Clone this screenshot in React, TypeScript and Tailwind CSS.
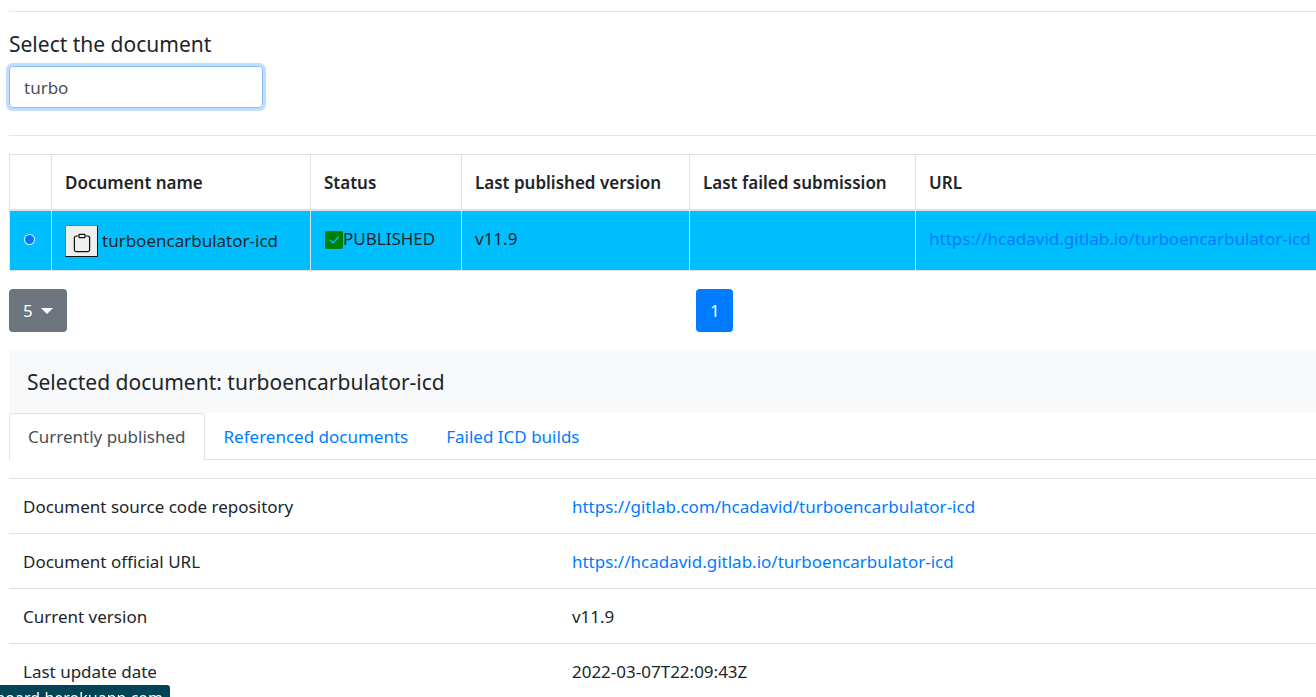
import { useState } from "react";

const columns = [
  { label: "Document name", width: "w-[259px]" },
  { label: "Status", width: "w-[151px]" },
  { label: "Last published version", width: "w-[228px]" },
  { label: "Last failed submission", width: "w-[226px]" },
  { label: "URL", width: "" },
];

const tabs = ["Currently published", "Referenced documents", "Failed ICD builds"];

const details = [
  { label: "Document source code repository", value: "https://gitlab.com/hcadavid/turboencarbulator-icd", link: true },
  { label: "Document official URL", value: "https://hcadavid.gitlab.io/turboencarbulator-icd", link: true },
  { label: "Current version", value: "v11.9", link: false },
  { label: "Last update date", value: "2022-03-07T22:09:43Z", link: false },
];

function ClipboardIcon() {
  return (
    <svg width="18" height="20" viewBox="0 0 18 20" fill="none" stroke="#111" strokeWidth="1.2" aria-hidden="true">
      <path d="M5.5 3H3.2A1.8 1.8 0 0 0 1.4 4.8v12a1.8 1.8 0 0 0 1.8 1.8h11.6a1.8 1.8 0 0 0 1.8-1.8v-12A1.8 1.8 0 0 0 14.8 3h-2.3" />
      <rect x="6" y="1.4" width="6" height="3.2" rx="0.6" />
    </svg>
  );
}

function CheckIcon() {
  return (
    <svg className="mt-1" width="18" height="18" viewBox="0 0 18 18" fill="none" aria-hidden="true">
      <rect width="18" height="18" rx="2" fill="#008000" />
      <path d="M5.2 9.2 8 11.9 13.2 6.3" stroke="#00bfff" strokeWidth="1.4" strokeLinecap="round" strokeLinejoin="round" />
    </svg>
  );
}

export default function App() {
  const [query, setQuery] = useState("turbo");
  const [tab, setTab] = useState(0);

  return (
    <div className="h-screen overflow-hidden bg-white pl-[9px] pt-[11px] font-['Noto_Sans',sans-serif] text-[17px] leading-[27px] text-[#212529]">
      <hr className="border-[#e5e5e5]" />
      <label htmlFor="search" className="mt-[19px] block text-[21px] leading-[27px]">
        Select the document
      </label>
      <input
        id="search"
        type="text"
        value={query}
        onChange={(e) => setQuery(e.target.value)}
        className="mt-2 block h-[42px] w-[254px] rounded-[4px] border border-[#80bdff] px-[14px] text-[#495057] shadow-[0_0_0_3px_#bfdeff] outline-none"
      />
      <hr className="mt-[27px] border-[#e5e5e5]" />

      <table className="mt-[18px] w-full table-fixed border-collapse border border-r-0 border-[#dee2e6]">
        <thead>
          <tr className="h-[55px] border-b-2 border-[#dee2e6]">
            <th className="w-[42px] border-r border-[#dee2e6]" aria-label="Selection" />
            {columns.map((c) => (
              <th
                key={c.label}
                className={`${c.width} border-r border-[#dee2e6] px-[13px] pt-px text-left font-semibold last:border-r-0`}
              >
                {c.label}
              </th>
            ))}
          </tr>
        </thead>
        <tbody>
          <tr className="h-[61px] bg-[#00bfff] align-top">
            <td className="border-r border-[#dee2e6] pl-[15px] pt-6">
              <input
                type="radio"
                name="document"
                aria-label="turboencarbulator-icd"
                defaultChecked
                className="block size-[9px] appearance-none rounded-full bg-[#0075ff] shadow-[0_0_0_1px_#e8f4ff]"
              />
            </td>
            <td className="border-r border-[#dee2e6] px-[13px] pt-[14px]">
              <div className="flex items-center gap-1">
                <button
                  type="button"
                  aria-label="Copy document name"
                  className="flex h-8 w-[33px] items-center justify-center border border-[#111] border-l-[#767676] border-t-[#767676] bg-[#efefef] pt-1"
                >
                  <ClipboardIcon />
                </button>
                <span>turboencarbulator-icd</span>
              </div>
            </td>
            <td className="border-r border-[#dee2e6] px-[14px] pt-[14px]">
              <div className="flex items-center">
                <CheckIcon />
                <span>PUBLISHED</span>
              </div>
            </td>
            <td className="border-r border-[#dee2e6] px-[13px] pt-[14px]">v11.9</td>
            <td className="border-r border-[#dee2e6]" />
            <td className="whitespace-nowrap pl-[13px] pt-[14px]">
              <a href="https://hcadavid.gitlab.io/turboencarbulator-icd" className="text-[#007bff]">
                https://hcadavid.gitlab.io/turboencarbulator-icd
              </a>
            </td>
          </tr>
        </tbody>
      </table>

      <div className="mt-[18px] flex">
        <div className="w-[52.6%]">
          <button type="button" className="flex h-[43px] items-center gap-2 rounded-[4px] bg-[#6c757d] px-[14px] text-white">
            5
            <span className="border-x-[6px] border-t-[6px] border-x-transparent border-t-white" />
          </button>
        </div>
        <button type="button" className="h-[43px] w-[37px] rounded-[4px] bg-[#007bff] text-center text-white">
          1
        </button>
      </div>

      <h2 className="mt-[18px] bg-[#f8f9fa] px-[18px] pb-[17px] pt-[19px] text-[21px] leading-[27px]">
        Selected document: turboencarbulator-icd
      </h2>

      <div role="tablist" className="flex h-[47px] border-b border-[#dee2e6]">
        {tabs.map((name, i) => (
          <button
            key={name}
            type="button"
            role="tab"
            aria-selected={i === tab}
            onClick={() => setTab(i)}
            className={
              i === tab
                ? "-mb-px rounded-t-[4px] border border-b-0 border-[#dee2e6] bg-white px-[18px] pb-px text-[#495057]"
                : "border border-b-0 border-transparent px-[18px] text-[#007bff]"
            }
          >
            {name}
          </button>
        ))}
      </div>

      <table className="mt-[18px] w-full table-fixed border-collapse">
        <tbody>
          {details.map((d) => (
            <tr key={d.label} className="h-[55px] border-t border-[#dee2e6]">
              <th scope="row" className="w-[42%] px-[14px] text-left font-normal">
                {d.label}
              </th>
              <td className="px-[14px]">
                {d.link ? (
                  <a href={d.value} className="text-[#007bff]">
                    {d.value}
                  </a>
                ) : (
                  d.value
                )}
              </td>
            </tr>
          ))}
        </tbody>
      </table>

      <div className="fixed bottom-0 left-0 flex h-3 w-[170px] justify-end overflow-hidden rounded-tr-[3px] bg-[#004455] pr-[7px] text-[16px] leading-[26px] text-white">
        <span className="whitespace-nowrap">board.herokuapp.com</span>
      </div>
    </div>
  );
}
